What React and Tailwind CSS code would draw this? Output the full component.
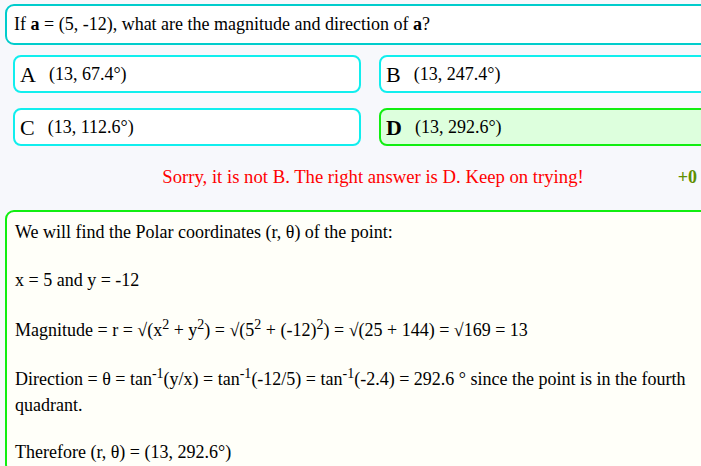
export default function App() {
  const options = [
    { key: "A", value: "(13, 67.4°)" },
    { key: "B", value: "(13, 247.4°)" },
    { key: "C", value: "(13, 112.6°)" },
    { key: "D", value: "(13, 292.6°)", correct: true },
  ];

  const sup = "text-[14px]";

  return (
    <div className="min-h-screen w-[740px] bg-[#f7f8fc] pl-[5px] pt-[4px] font-['Liberation_Serif',serif] text-[18px] text-black">
      <div className="w-[730px] rounded-[9px] border-2 border-[#00cccc] bg-white px-[7px] py-[6px] leading-[25px]">
        If <b>a</b> = (5, -12), what are the magnitude and direction of <b>a</b>?
      </div>

      <div className="ml-[8px] mt-[10px] grid w-[714px] grid-cols-2 gap-x-[18px] gap-y-[15px]">
        {options.map((o) => (
          <div
            key={o.key}
            className={
              o.correct
                ? "flex h-[38px] items-center gap-[13px] rounded-[8px] border-2 border-[#11ee11] bg-[#ddffdd] px-[5px]"
                : "flex h-[38px] items-center gap-[13px] rounded-[8px] border-2 border-[#11eeee] bg-white px-[5px]"
            }
          >
            <span className={o.correct ? "text-[22px] font-bold" : "text-[22px]"}>{o.key}</span>
            <span>{o.value}</span>
          </div>
        ))}
      </div>

      <div className="mt-[12px] grid h-[38px] w-[730px] grid-cols-[1fr_auto_1fr] items-center pl-[6px]">
        <div />
        <div className="text-[18.7px] text-[#ff0000]">
          Sorry, it is not B. The right answer is D. Keep on trying!
        </div>
        <div className="pl-[94px] text-[18px] font-bold text-[#5f8f00]">+0</div>
      </div>

      <div className="mt-[14px] w-[730px] rounded-[9px] border-2 border-[#11ee11] bg-[#fffff9] px-[8px] py-[8px] leading-[24px]">
        <p>We will find the Polar coordinates (r, θ) of the point:</p>
        <p className="mt-[24px]">x = 5 and y = -12</p>
        <p className="mt-[24px] pt-[2px]">
          Magnitude = r = √(x<sup className={sup}>2</sup> + y<sup className={sup}>2</sup>) = √(5<sup className={sup}>2</sup> + (-12)<sup className={sup}>2</sup>) = √(25 + 144) = √169 = 13
        </p>
        <p className="mt-[24px] leading-[26px]">
          Direction = θ = tan<sup className={sup}>-1</sup>(y/x) = tan<sup className={sup}>-1</sup>(-12/5) = tan<sup className={sup}>-1</sup>(-2.4) = 292.6 ° since the point is in the fourth quadrant.
        </p>
        <p className="mt-[22px]">Therefore (r, θ) = (13, 292.6°)</p>
      </div>
    </div>
  );
}
